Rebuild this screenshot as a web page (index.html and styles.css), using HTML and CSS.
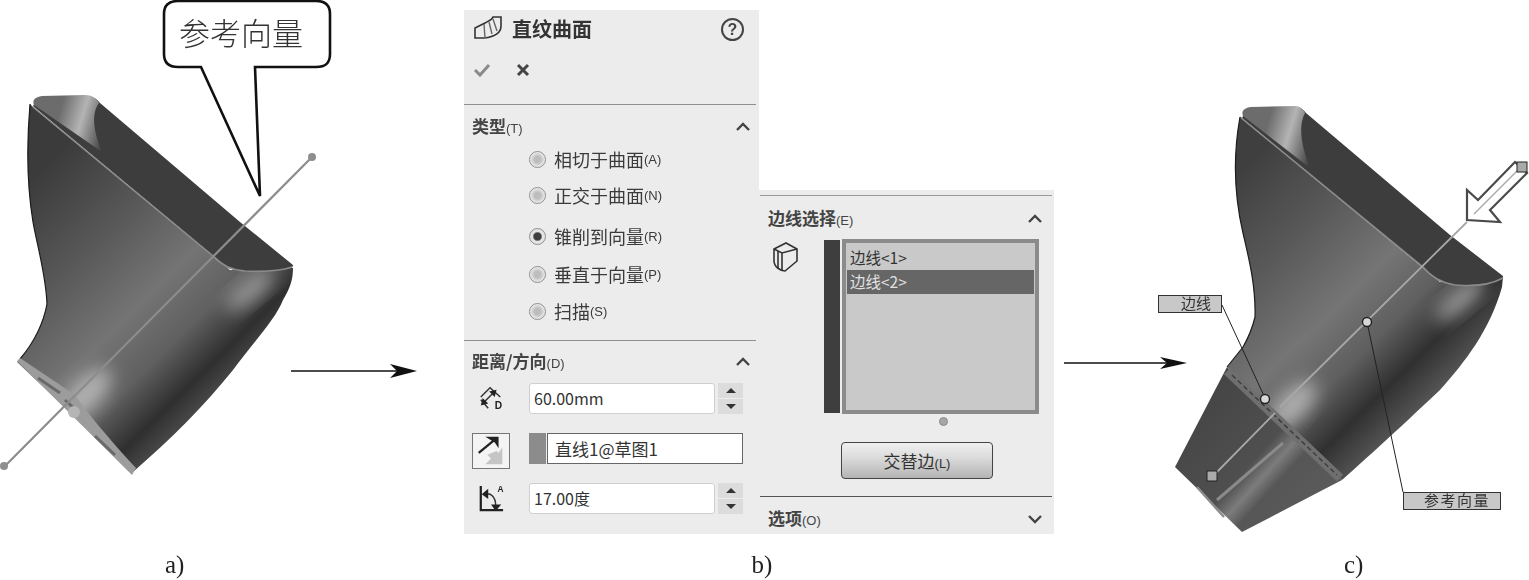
FILE: index.html
```html
<!DOCTYPE html>
<html lang="zh-CN">
<head>
<meta charset="utf-8">
<title>直纹曲面</title>
<link rel="stylesheet" href="styles.css">
</head>
<body>
<main class="figure">
  <svg class="view view-a" viewBox="0 0 464 580" aria-label="a">
    <defs>
      <linearGradient id="bodyA" gradientUnits="userSpaceOnUse" x1="40" y1="170" x2="250" y2="385">
        <stop offset="0" stop-color="#3b3b3b"/><stop offset=".3" stop-color="#585858"/>
        <stop offset=".55" stop-color="#747474"/><stop offset=".72" stop-color="#606060"/>
        <stop offset=".86" stop-color="#2f2f2f"/><stop offset="1" stop-color="#5a5a5a"/>
      </linearGradient>
      <linearGradient id="wall" gradientUnits="userSpaceOnUse" x1="60" y1="110" x2="110" y2="125">
        <stop offset="0" stop-color="#6c6c6c"/><stop offset=".45" stop-color="#b4b4b4"/>
        <stop offset="1" stop-color="#3c3c3c"/>
      </linearGradient>
      <linearGradient id="bodyC" gradientUnits="userSpaceOnUse" x1="1240" y1="170" x2="1450" y2="385">
        <stop offset="0" stop-color="#3f3f3f"/><stop offset=".3" stop-color="#5a5a5a"/>
        <stop offset=".55" stop-color="#757575"/><stop offset=".72" stop-color="#5f5f5f"/>
        <stop offset=".86" stop-color="#303030"/><stop offset="1" stop-color="#585858"/>
      </linearGradient>
      <linearGradient id="wallC" gradientUnits="userSpaceOnUse" x1="1268" y1="122" x2="1318" y2="137">
        <stop offset="0" stop-color="#6c6c6c"/><stop offset=".45" stop-color="#b4b4b4"/>
        <stop offset="1" stop-color="#3c3c3c"/>
      </linearGradient>
      <linearGradient id="cone" gradientUnits="userSpaceOnUse" x1="1190" y1="420" x2="1300" y2="520">
        <stop offset="0" stop-color="#464646"/><stop offset=".5" stop-color="#4f4f4f"/>
        <stop offset=".62" stop-color="#7c7c7c"/><stop offset=".72" stop-color="#565656"/>
        <stop offset="1" stop-color="#5a5a5a"/>
      </linearGradient>
      <filter id="soft" x="-50%" y="-50%" width="200%" height="200%"><feGaussianBlur stdDeviation="9"/></filter>
      <clipPath id="clipA"><path d="M30 104C27 140 26 180 33 222C37 245 46 275 47 304C44 320 36 340 20 359L17 362L133 472C170 440 205 405 233 370C255 340 275 320 283 300C290 288 293 280 293 268L97 102Z"/></clipPath>
      <clipPath id="clipC"><path d="M1240 117C1234 150 1233 190 1243 233C1248 255 1256 285 1255 317C1252 330 1247 340 1243 347L1227 367L1342 480C1370 455 1390 437 1440 390C1465 362 1490 330 1502 287L1503 277L1305 112Z"/></clipPath>
    </defs>
    <path class="callout" d="M178 1H316C326 1 330 6 330 14V54C330 63 326 67 316 67H255L260 196L201 67H178C168 67 164 62 164 54V14C164 6 168 1 178 1Z"/>
    <text class="callout-text" x="179" y="45">参考向量</text>

    <path fill="url(#bodyA)" d="M30 104C27 140 26 180 33 222C37 245 46 275 47 304C44 320 36 340 20 359L17 362L133 472C170 440 205 405 233 370C255 340 275 320 283 300C290 288 293 280 293 268L230 270L33 107Z"/>
    <g clip-path="url(#clipA)">
      <ellipse class="glow" cx="85" cy="395" rx="16" ry="34" transform="rotate(44 85 395)"/>
      <ellipse class="glow-mid" cx="250" cy="290" rx="30" ry="10" transform="rotate(-40 250 290)"/>
    </g>
    <path fill="#3d3d3d" d="M33 106L38 98L85 96C92 96 96 98 100 103L240 222L293 265C293 268 290 268 285 269C265 272 240 273 228 268Z"/>
    <path fill="url(#wall)" d="M34 105C32 100 35 97 42 96L85 95C92 95 96 98 99 103C90 115 95 135 102 152Z"/>
    <path class="edge" d="M33 107L213 256C222 266 232 270 245 271C265 272 280 271 292 267"/>
    <path class="rim" d="M30 104C27 140 26 180 33 222C37 245 46 275 47 304C44 320 36 340 20 359"/>
    <path fill="#9c9c9c" d="M17 361L20 358L75 395C85 410 110 440 136 468L132 475Z"/>
    <path class="ring" d="M38 378L60 393M65 400L78 412M95 436L115 455"/>
    <circle cx="74" cy="412" r="6" fill="#b5b5b5"/>
    <line class="axis" x1="312" y1="157" x2="5" y2="466"/>
    <circle class="axis-dot" cx="312" cy="157" r="4"/>
    <circle class="axis-dot" cx="4" cy="466" r="4"/>

    <line class="arrow-line" x1="291" y1="371" x2="400" y2="371"/>
    <path class="arrow-head" d="M390 364L417 371L390 378L397 371Z"/>
    <text class="caption" x="165" y="573">a)</text>
  </svg>

  <section class="panel panel-left">
    <header class="head">
      <div class="title-row">
        <svg class="title-icon" viewBox="0 0 30 26">
          <path class="i-stroke" d="M2 12L12 7C15 5 19 4 20 1H28V10C28 18 20 21 11 22H2Z"/>
          <path class="i-thin" d="M11 8L12 22M16 6L19 18M20 3L24 15"/>
        </svg>
        <h1 class="title">直纹曲面</h1>
        <span class="help">?</span>
      </div>
      <div class="actions">
        <svg class="act" viewBox="0 0 18 14"><path class="ok" d="M2 7L7 12L16 2"/></svg>
        <svg class="act" viewBox="0 0 14 14"><path class="no" d="M2 2L12 12M12 2L2 12"/></svg>
      </div>
    </header>

    <section class="group group-type">
      <div class="group-head">
        <span class="group-name">类型<small>(T)</small></span>
        <svg class="caret" viewBox="0 0 16 10"><path d="M2 8L8 2L14 8"/></svg>
      </div>
      <ul class="radios">
        <li class="radio"><i class="dot"></i>相切于曲面<small>(A)</small></li>
        <li class="radio"><i class="dot"></i>正交于曲面<small>(N)</small></li>
        <li class="radio"><i class="dot on"></i>锥削到向量<small>(R)</small></li>
        <li class="radio"><i class="dot"></i>垂直于向量<small>(P)</small></li>
        <li class="radio"><i class="dot"></i>扫描<small>(S)</small></li>
      </ul>
    </section>

    <section class="group group-dist">
      <div class="group-head">
        <span class="group-name">距离/方向<small>(D)</small></span>
        <svg class="caret" viewBox="0 0 16 10"><path d="M2 8L8 2L14 8"/></svg>
      </div>
      <div class="field-row row-1">
        <svg class="f-icon" viewBox="0 0 28 30">
          <path class="i-stroke" d="M3 14L13 4L24 14M3 17L11 26M4 15"/>
          <path class="i-stroke" d="M5 21L18 8"/>
          <path fill="#222" d="M3 23L5 15L11 21ZM20 6L12 8L18 14Z"/>
          <text class="f-letter" x="18" y="27">D</text>
        </svg>
        <div class="input">60.00mm</div>
        <div class="spin"><span class="up"></span><span class="down"></span></div>
      </div>
      <div class="field-row row-2">
        <div class="flip">
          <svg viewBox="0 0 36 36">
            <path fill="#c5c5c5" d="M30 14V32H12L18 26L14 22L24 18L26 20Z"/>
            <path class="i-bold" d="M5 20L22 6"/>
            <path fill="#222" d="M12 3H26V15L22 9Z"/>
          </svg>
        </div>
        <span class="swatch"></span>
        <div class="input dark">直线1@草图1</div>
      </div>
      <div class="field-row row-3">
        <svg class="f-icon" viewBox="0 0 28 32">
          <path class="i-bold" d="M3 3V29H27"/>
          <path class="i-stroke" d="M7 12C14 10 19 15 19 24"/>
          <path fill="#222" d="M4 12L11 6V17ZM14 23H25L19 30Z"/>
          <text class="f-letter small" x="21" y="10">A</text>
        </svg>
        <div class="input">17.00度</div>
        <div class="spin"><span class="up"></span><span class="down"></span></div>
      </div>
    </section>
  </section>

  <section class="panel panel-right">
    <section class="group group-edge">
      <div class="group-head">
        <span class="group-name">边线选择<small>(E)</small></span>
        <svg class="caret" viewBox="0 0 16 10"><path d="M2 8L8 2L14 8"/></svg>
      </div>
      <div class="select-row">
        <svg class="cube" viewBox="0 0 28 32">
          <path class="i-stroke" d="M3 8L15 2L26 8V20L14 30C10 30 3 26 3 20Z"/>
          <path class="i-stroke" d="M3 8L11 12L26 8M11 12V30M7 10V28"/>
        </svg>
        <span class="bar"></span>
        <ul class="list">
          <li class="item">边线&lt;1&gt;</li>
          <li class="item sel">边线&lt;2&gt;</li>
        </ul>
      </div>
      <span class="grip"></span>
      <button class="btn" type="button">交替边<small>(L)</small></button>
    </section>
    <section class="group group-opt">
      <div class="group-head">
        <span class="group-name">选项<small>(O)</small></span>
        <svg class="caret" viewBox="0 0 16 10"><path d="M2 2L8 8L14 2"/></svg>
      </div>
    </section>
  </section>

  <svg class="view view-c" viewBox="1054 0 475 580" aria-label="c">
    <line class="arrow-line" x1="1064" y1="363" x2="1170" y2="363"/>
    <path class="arrow-head" d="M1160 357L1187 363L1160 369L1167 363Z"/>

    <path fill="url(#cone)" d="M1227 367L1342 480L1242 532L1175 467Z"/>
    <path class="cone-hi" d="M1283 443L1217 500"/>
    <path class="cone-end" d="M1197 487L1224 517"/>
    <path fill="url(#bodyC)" d="M1240 117C1234 150 1233 190 1243 233C1248 255 1256 285 1255 317C1252 330 1247 340 1243 347L1227 367L1342 480C1370 455 1390 437 1440 390C1465 362 1490 330 1502 287L1503 277L1440 282L1240 117Z"/>
    <g clip-path="url(#clipC)">
      <ellipse class="glow" cx="1293" cy="405" rx="14" ry="30" transform="rotate(44 1293 405)"/>
      <ellipse class="glow-mid" cx="1460" cy="300" rx="30" ry="10" transform="rotate(-40 1460 300)"/>
    </g>
    <path fill="#3d3d3d" d="M1242 118L1247 109L1295 107C1300 107 1303 109 1306 113L1450 235L1503 276C1503 280 1498 281 1493 282C1470 286 1450 286 1438 280Z"/>
    <path fill="url(#wallC)" d="M1243 116C1241 111 1244 108 1251 107L1295 106C1300 106 1303 109 1305 113C1297 128 1303 150 1310 168Z"/>
    <path class="edge" d="M1240 117L1423 267C1432 278 1442 283 1455 285C1475 287 1490 285 1503 278"/>
    <path class="rim" d="M1240 117C1234 150 1233 190 1243 233C1248 255 1256 285 1255 317C1252 330 1247 340 1243 347"/>
    <path class="rim" d="M1243 347L1227 367"/>
    <path class="seam-band" d="M1227 371L1340 478"/>
    <path class="seam-dash" d="M1232 375L1337 475"/>

    <path class="axis-white" d="M1467 222L1280 407M1275 413L1215 474"/>
    <path class="hollow" d="M1467 220L1467 190L1478 200L1515 162L1527 173L1490 210L1500 222Z"/>
    <path class="hollow-in" d="M1474 214L1521 167"/>
    <rect class="handle" x="1517" y="162" width="10" height="10"/>
    <rect class="handle" x="1207" y="471" width="10" height="10"/>

    <path class="leader" d="M1222 305L1265 398"/>
    <path class="leader" d="M1367 322L1403 492"/>
    <rect class="tag" x="1158.5" y="295.5" width="63" height="17"/>
    <text class="tag-text" x="1181" y="309">边线</text>
    <rect class="tag" x="1403.5" y="492.5" width="97" height="17"/>
    <text class="tag-text wide" x="1424" y="506">参考向量</text>
    <circle class="pin" cx="1265" cy="399" r="4.5"/>
    <circle class="pin" cx="1367" cy="322" r="4.5"/>
    <text class="caption" x="1344" y="573">c)</text>
  </svg>

  <p class="caption-b">b)</p>
</main>
</body>
</html>
```

FILE: styles.css
```css
* { box-sizing: border-box; }
html, body { margin: 0; padding: 0; background: #fff; }
body { width: 1529px; height: 580px; overflow: hidden; font-family: "Noto Sans CJK SC", "Liberation Sans", sans-serif; color: #333; }

.figure {
  display: grid;
  grid-template-columns: 464px 295px 295px 475px;
  grid-template-rows: 534px 46px;
  width: 1529px;
  height: 580px;
  filter: blur(0.35px);
}
.view { display: block; }
.view-a { grid-column: 1; grid-row: 1 / 3; width: 464px; height: 580px; }
.view-c { grid-column: 4; grid-row: 1 / 3; width: 475px; height: 580px; }
.caption-b {
  grid-column: 2 / 4; grid-row: 2; margin: 0; padding: 16px 0 0 6px;
  text-align: center; font: 25px/30px "Liberation Serif", serif; color: #222;
}

/* drawing parts */
.callout { fill: #fff; stroke: #111; stroke-width: 2.6; stroke-linejoin: miter; }
.callout-text { font-family: "Noto Sans CJK SC", sans-serif; font-size: 31px; font-weight: 300; fill: #333; }
.caption { font-family: "Liberation Serif", serif; font-size: 25px; fill: #222; }
.edge { fill: none; stroke: #8a8a8a; stroke-width: 1.6; }
.rim { fill: none; stroke: #1c1c1c; stroke-width: 1.2; }
.axis { stroke: #8c8c8c; stroke-width: 2.2; }
.axis-dot { fill: #8e8e8e; }
.axis-white { fill: none; stroke: #a8a8a8; stroke-width: 1.8; }
.ring { fill: none; stroke: #6a6a6a; stroke-width: 3; }
.glow { fill: #b0b0b0; filter: url(#soft); }
.glow-mid { fill: #9a9a9a; filter: url(#soft); }
.arrow-line { stroke: #111; stroke-width: 1.6; }
.arrow-head { fill: #111; }
.cone-hi { fill: none; stroke: #8a8a8a; stroke-width: 3; }
.cone-end { fill: none; stroke: #8c8c8c; stroke-width: 2.5; }
.seam-band { fill: none; stroke: #6f6f6f; stroke-width: 9; }
.seam-dash { fill: none; stroke: #3e3e3e; stroke-width: 1.5; stroke-dasharray: 5 3; }
.hollow { fill: #fff; stroke: #4a4a4a; stroke-width: 2.2; stroke-linejoin: miter; }
.hollow-in { fill: none; stroke: #aaa; stroke-width: 1.5; }
.handle { fill: #aaa; stroke: #222; stroke-width: 1; }
.leader { fill: none; stroke: #222; stroke-width: 1; }
.tag { fill: #c8c8c8; stroke: #333; stroke-width: 1; }
.tag-text { font-family: "Noto Sans CJK SC", sans-serif; font-size: 15px; fill: #333; }
.tag-text.wide { font-size: 15px; letter-spacing: 1.5px; }
.pin { fill: #d8d8d8; stroke: #222; stroke-width: 1.4; }

/* panels */
.panel { background: #ececec; display: flex; flex-direction: column; }
.panel-left { grid-column: 2; grid-row: 1; margin-top: 10px; height: 524px; }
.panel-right { grid-column: 3; grid-row: 1; margin-top: 190px; height: 344px; padding-top: 5px; }

.head { height: 95px; margin-right: 3px; border-bottom: 1px solid #8f8f8f; padding: 0 0 0 9px; }
.title-row { display: flex; align-items: center; height: 38px; }
.title-icon { width: 30px; height: 26px; margin-right: 9px; }
.title { margin: 0; font-size: 20px; line-height: 26px; font-weight: 700; color: #333; }
.help {
  width: 23px; height: 23px; margin-left: auto; margin-right: 12px;
  border: 2px solid #444; border-radius: 50%;
  font: 700 16px/19px "Liberation Sans", sans-serif; text-align: center; color: #444;
}
.actions { display: flex; align-items: center; gap: 25px; height: 44px; }
.act { width: 18px; height: 14px; }
.act + .act { width: 14px; }
.ok { fill: none; stroke: #8a8a8a; stroke-width: 3; }
.no { fill: none; stroke: #444; stroke-width: 3; }

.i-stroke { fill: none; stroke: #333; stroke-width: 1.6; }
.i-thin { fill: none; stroke: #666; stroke-width: 1.4; }
.i-bold { fill: none; stroke: #222; stroke-width: 2.4; }

.group { margin-right: 3px; }
.group-head { display: flex; align-items: center; justify-content: space-between; height: 20px; }
.group-name { font-size: 17px; line-height: 20px; font-weight: 700; color: #444; }
.group-name small, .radio small, .btn small {
  font-family: "Liberation Sans", sans-serif; font-size: 13px; font-weight: 400;
}
.caret { width: 16px; height: 10px; margin-right: 5px; }
.caret path { fill: none; stroke: #444; stroke-width: 2.4; }

.group-type { height: 236px; padding: 12px 0 0 8px; border-bottom: 1px solid #8f8f8f; }
.radios { list-style: none; margin: 0; padding: 0 0 0 56px; }
.radio { display: flex; align-items: center; height: 24px; font-size: 18px; line-height: 24px; color: #3a3a3a; }
.radio small { margin-top: 2px; }
.radio:nth-child(1) { margin-top: 10px; }
.radio:nth-child(2) { margin-top: 12px; }
.radio:nth-child(3) { margin-top: 17px; }
.radio:nth-child(4) { margin-top: 14px; }
.radio:nth-child(5) { margin-top: 13px; }
.dot {
  width: 17px; height: 17px; margin: 0 8px 0 1px; border-radius: 50%;
  border: 1.5px solid #8e8e8e;
  background: radial-gradient(circle, #bdbdbd 0 3px, #dcdcdc 6px, #f4f4f4 8px);
}
.dot.on { background: radial-gradient(circle, #3f3f3f 0 3.5px, #e4e4e4 5px); }

.group-dist { padding: 11px 0 0 8px; }
.group-dist .group-head { margin-bottom: 11px; }
.field-row { display: flex; align-items: flex-start; padding-right: 13px; }
.f-icon { width: 26px; height: 30px; margin-left: 6px; margin-right: 25px; flex: none; }
.input {
  height: 31px; background: #fff; border: 1px solid #cfcfcf; border-radius: 3px;
  font-size: 16px; line-height: 29px; padding-left: 4px; width: 186px; color: #333;
}
.input.dark { width: 196px; margin-left: 1px; border: 1.5px solid #666; border-radius: 0; padding-left: 7px; font-size: 17px; }
.spin { width: 25px; height: 31px; margin-left: 3px; display: flex; flex-direction: column; gap: 1px; }
.spin span { flex: 1; background: #dcdcdc; position: relative; display: flex; align-items: center; justify-content: center; }
.spin .up::after, .spin .down::after { content: ""; border-left: 5px solid transparent; border-right: 5px solid transparent; }
.spin .up::after { border-bottom: 5px solid #333; }
.spin .down::after { border-top: 5px solid #333; }
.row-2 { margin-top: 19px; }
.row-3 { margin-top: 14px; }
.f-letter { font: 700 11px "Liberation Sans", sans-serif; fill: #222; }
.f-letter.small { font-size: 9px; }
.flip { width: 38px; height: 36px; margin-right: 19px; border: 1.5px solid #777; background: #f4f4f4; flex: none; }
.flip svg { display: block; width: 100%; height: 100%; }
.swatch { width: 17px; height: 31px; background: #8c8c8c; flex: none; }

.group-edge { height: 302px; padding: 13px 0 0 8px; border-top: 1px solid #9a9a9a; margin-left: 1px; margin-right: 2px; border-bottom: 1px solid #555; }
.group-edge .group-head { margin-right: 4px; }
.select-row { display: flex; align-items: flex-start; margin-top: 10px; }
.cube { width: 28px; height: 32px; margin: 2px 25px 0 3px; flex: none; }
.bar { width: 16px; height: 173px; margin-top: 1px; background: #3e3e3e; flex: none; }
.list {
  list-style: none; margin: 0 0 0 2px; padding: 3px 1px 0; width: 197px; height: 175px;
  background: #c9c9c9; border: 4px solid #8b8b8b;
}
.item { height: 24px; padding-left: 3px; font-size: 15.5px; line-height: 22px; color: #333; }
.item.sel { height: 24px; background: #666; color: #e0e0e0; }
.grip {
  display: block; width: 9px; height: 9px; margin: 3px 0 0 171px; border-radius: 50%;
  background: #a6a6a6; border: 1.5px solid #8a8a8a;
}
.btn {
  display: block; width: 152px; height: 37px; margin: 16px 0 0 73px; padding: 0;
  border: 1.5px solid #444; border-radius: 4px;
  background: linear-gradient(#f0f0f0, #dcdcdc 40%, #b4b4b4);
  font-family: "Noto Sans CJK SC", sans-serif; font-size: 17px; color: #333;
}
.group-opt { padding: 12px 0 0 8px; margin-left: 1px; margin-right: 2px; }
.group-opt .group-head { margin-right: 4px; }
```
